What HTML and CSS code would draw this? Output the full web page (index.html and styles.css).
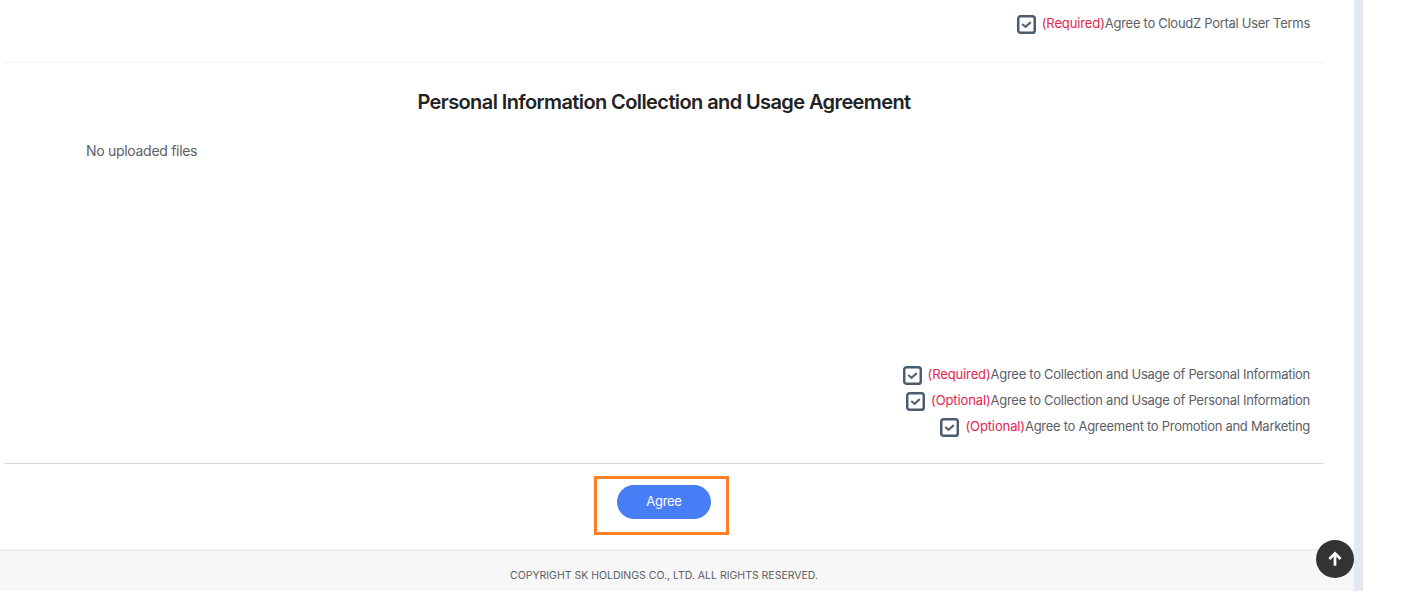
FILE: index.html
```html
<!DOCTYPE html>
<html lang="en">
<head>
    <meta charset="UTF-8">
    <title>Terms Agreement</title>
    <link rel="stylesheet" href="styles.css">
</head>
<body>
    <div class="page">
        <div class="content">
            <!-- Portal terms -->
            <div class="agree-list first-list">
                <label class="agree-row">
                    <svg class="check" viewBox="0 0 20 20"><rect x="1.3" y="1.3" width="17.4" height="17.4" rx="2.5"/><path d="M5.5 9.5l3.5 3 5.5-5"/></svg>
                    <span><em>(Required)</em>Agree to CloudZ Portal User Terms</span>
                </label>
            </div>
            <div class="divider"></div>

            <!-- Personal information -->
            <h2>Personal Information Collection and Usage Agreement</h2>
            <p class="no-files">No uploaded files</p>
            <div class="agree-list">
                <label class="agree-row">
                    <svg class="check" viewBox="0 0 20 20"><rect x="1.3" y="1.3" width="17.4" height="17.4" rx="2.5"/><path d="M5.5 9.5l3.5 3 5.5-5"/></svg>
                    <span><em>(Required)</em>Agree to Collection and Usage of Personal Information</span>
                </label>
                <label class="agree-row">
                    <svg class="check" viewBox="0 0 20 20"><rect x="1.3" y="1.3" width="17.4" height="17.4" rx="2.5"/><path d="M5.5 9.5l3.5 3 5.5-5"/></svg>
                    <span><em>(Optional)</em>Agree to Collection and Usage of Personal Information</span>
                </label>
                <label class="agree-row">
                    <svg class="check" viewBox="0 0 20 20"><rect x="1.3" y="1.3" width="17.4" height="17.4" rx="2.5"/><path d="M5.5 9.5l3.5 3 5.5-5"/></svg>
                    <span><em>(Optional)</em>Agree to Agreement to Promotion and Marketing</span>
                </label>
            </div>
            <div class="divider dark"></div>

            <div class="actions">
                <div class="highlight">
                    <button class="agree-button">Agree</button>
                </div>
            </div>
        </div>

        <footer class="footer">COPYRIGHT SK HOLDINGS CO., LTD. ALL RIGHTS RESERVED.</footer>

        <a class="to-top" href="#">
            <svg viewBox="0 0 16 16"><path d="M8 14V3M3 8l5-5 5 5"/></svg>
        </a>
    </div>
</body>
</html>
```

FILE: styles.css
```css
html, body {
    margin: 0;
    padding: 0;
    background-color: #fff;
}

body {
    font-family: Inter, "Liberation Sans", sans-serif;
    color: #5c6066;
    height: 613px;
    overflow: hidden;
}

.page {
    position: relative;
    width: 1354px;
    height: 591px;
    border-right: 9px solid #e4e8ef;
    display: flex;
    flex-direction: column;
}

.content {
    flex: 1;
    padding: 0 30px 0 4px;
}

.agree-list {
    display: flex;
    flex-direction: column;
    align-items: flex-end;
    gap: 6px;
    padding-right: 14px;
    height: 72px;
}

.first-list {
    height: auto;
    padding-top: 13px;
    padding-bottom: 29px;
}

.agree-row {
    display: flex;
    align-items: center;
    gap: 6px;
    height: 20px;
    font-size: 13px;
    line-height: 20px;
    letter-spacing: -0.28px;
}

.agree-row em {
    font-style: normal;
    color: #e8254f;
    letter-spacing: -0.12px;
}

.check {
    width: 19px;
    height: 19px;
    flex-shrink: 0;
    margin-top: 3px;
    fill: #fff;
    stroke: #4a5d6e;
    stroke-width: 2.6;
}

.check path {
    fill: none;
    stroke: #55646f;
    stroke-width: 2.2;
}

.divider {
    height: 1px;
    background-color: #f1f1f1;
}

.divider.dark {
    background-color: #d9d9d9;
    margin-top: 27px;
}

h2 {
    margin: 26px 0 0;
    font-size: 20px;
    line-height: 26px;
    font-weight: 600;
    letter-spacing: -0.6px;
    text-align: center;
    color: #222;
}

.no-files {
    margin: 26px 0 0 82px;
    height: 223px;
    font-size: 14px;
    line-height: 20px;
    letter-spacing: -0.3px;
}

.actions {
    display: flex;
    justify-content: center;
    padding-top: 12px;
}

.highlight {
    display: flex;
    align-items: flex-start;
    box-sizing: border-box;
    width: 135px;
    height: 59px;
    margin-right: 5px;
    padding: 6px 15px 0 20px;
    border: 3px solid #ff7f27;
}

.agree-button {
    width: 94px;
    height: 34px;
    padding: 0 0 2px;
    border: none;
    border-radius: 17px;
    background-color: #477ef5;
    color: #fff;
    font-family: inherit;
    font-size: 13px;
    letter-spacing: -0.3px;
    cursor: pointer;
}

.footer {
    box-sizing: border-box;
    height: 42px;
    padding-top: 18px;
    padding-right: 26px;
    background-color: #f7f7f7;
    border-top: 2px solid #eeeeee;
    font-size: 10.5px;
    line-height: 14px;
    text-align: center;
}

.to-top {
    position: absolute;
    right: 0;
    top: 540px;
    width: 38px;
    height: 38px;
    border-radius: 50%;
    background-color: #333;
    display: flex;
    align-items: center;
    justify-content: center;
}

.to-top svg {
    width: 18px;
    height: 18px;
    fill: none;
    stroke: #fff;
    stroke-width: 2.4;
}
```
